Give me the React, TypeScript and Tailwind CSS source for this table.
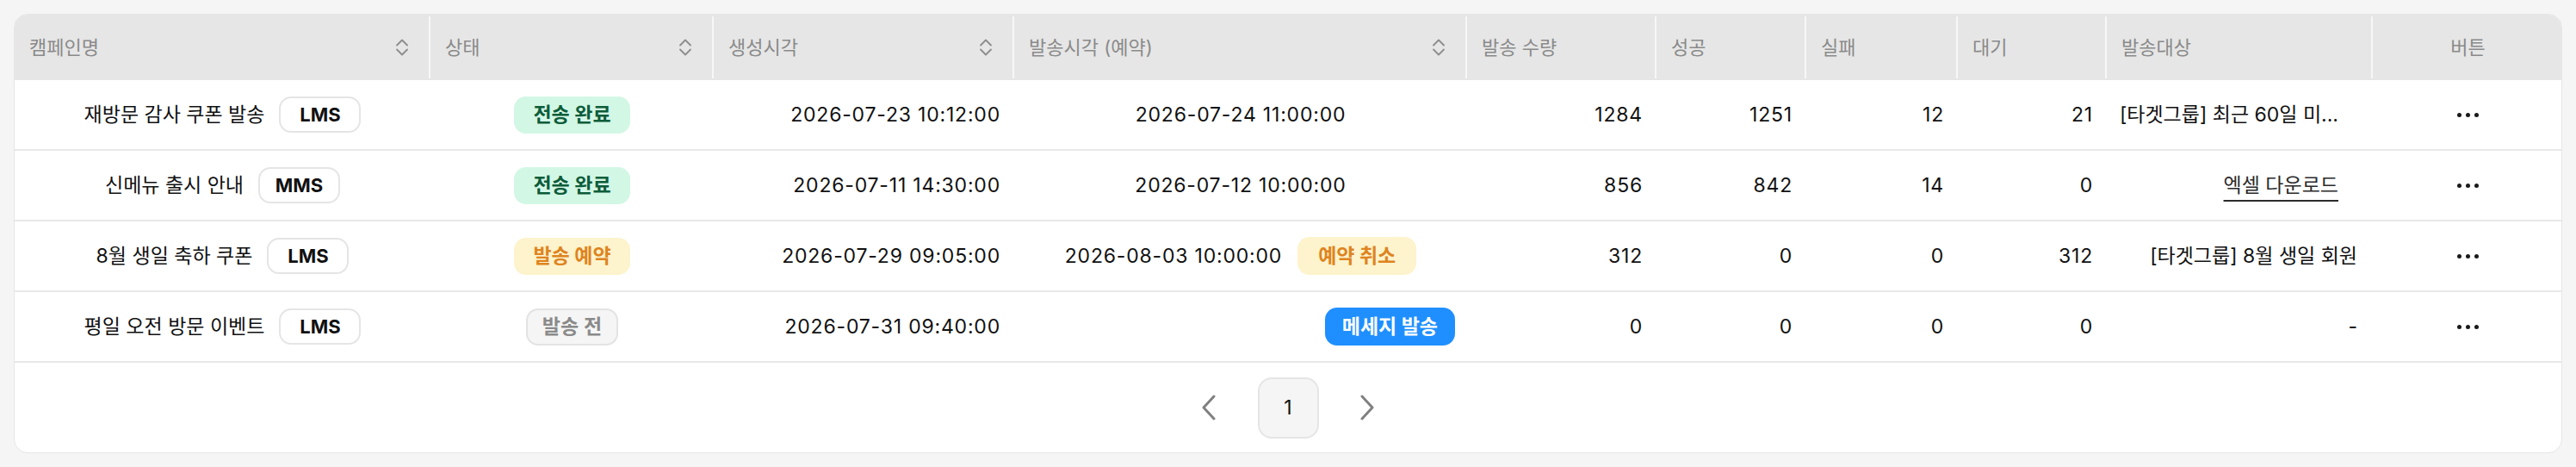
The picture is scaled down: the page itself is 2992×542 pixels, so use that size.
const GRID =
  "grid grid-cols-[483px_329px_349px_526px_220px_174px_176px_173px_309px_221px]";

type Status = "done" | "reserved" | "draft";

interface Row {
  name: string;
  kind: string;
  status: Status;
  createdAt: string;
  sendAt: string | null;
  total: number;
  success: number;
  fail: number;
  wait: number;
  target: string;
  targetType: "text" | "excel" | "none";
}

const rows: Row[] = [
  {
    name: "재방문 감사 쿠폰 발송",
    kind: "LMS",
    status: "done",
    createdAt: "2026-07-23 10:12:00",
    sendAt: "2026-07-24 11:00:00",
    total: 1284,
    success: 1251,
    fail: 12,
    wait: 21,
    target: "[타겟그룹] 최근 60일 미...",
    targetType: "text",
  },
  {
    name: "신메뉴 출시 안내",
    kind: "MMS",
    status: "done",
    createdAt: "2026-07-11 14:30:00",
    sendAt: "2026-07-12 10:00:00",
    total: 856,
    success: 842,
    fail: 14,
    wait: 0,
    target: "엑셀 다운로드",
    targetType: "excel",
  },
  {
    name: "8월 생일 축하 쿠폰",
    kind: "LMS",
    status: "reserved",
    createdAt: "2026-07-29 09:05:00",
    sendAt: "2026-08-03 10:00:00",
    total: 312,
    success: 0,
    fail: 0,
    wait: 312,
    target: "[타겟그룹] 8월 생일 회원",
    targetType: "text",
  },
  {
    name: "평일 오전 방문 이벤트",
    kind: "LMS",
    status: "draft",
    createdAt: "2026-07-31 09:40:00",
    sendAt: null,
    total: 0,
    success: 0,
    fail: 0,
    wait: 0,
    target: "-",
    targetType: "none",
  },
];

// header columns, sortable ones get the up/down icon
const headers: { label: string; sort?: boolean; center?: boolean }[] = [
  { label: "캠페인명", sort: true },
  { label: "상태", sort: true },
  { label: "생성시각", sort: true },
  { label: "발송시각 (예약)", sort: true },
  { label: "발송 수량" },
  { label: "성공" },
  { label: "실패" },
  { label: "대기" },
  { label: "발송대상" },
  { label: "버튼", center: true },
];

function SortIcon() {
  return (
    <svg width="18" height="24" viewBox="0 0 18 24" fill="none" stroke="#8c8c8c" strokeWidth="1.8" strokeLinecap="round" strokeLinejoin="round">
      <path d="M3 9.5 L9 3.5 L15 9.5" />
      <path d="M3 14.5 L9 20.5 L15 14.5" />
    </svg>
  );
}

function StatusBadge({ status }: { status: Status }) {
  if (status === "done") {
    return (
      <span className="h-[43px] px-[22px] rounded-[14px] bg-[#d2f7e5] text-[#0d5c3a] font-bold flex items-center">
        전송 완료
      </span>
    );
  }
  if (status === "reserved") {
    return (
      <span className="h-[43px] px-[22px] rounded-[14px] bg-[#fdf3cc] text-[#de8421] font-bold flex items-center">
        발송 예약
      </span>
    );
  }
  return (
    <span className="h-[43px] px-[17px] rounded-[14px] bg-[#f5f5f5] border-2 border-[#e3e3e3] text-[#8a8a8a] font-semibold flex items-center">
      발송 전
    </span>
  );
}

function SendTimeCell({ row }: { row: Row }) {
  if (!row.sendAt) {
    return (
      <div className="flex items-center justify-end pr-[14px]">
        <button className="h-[44px] px-[20px] rounded-[14px] bg-[#1f8fff] text-white font-bold">
          메세지 발송
        </button>
      </div>
    );
  }
  return (
    <div className="flex items-center justify-center gap-[18px]">
      <span className="tracking-[0.035em]">{row.sendAt}</span>
      {row.status === "reserved" && (
        <span className="h-[44px] px-[24px] rounded-[14px] bg-[#fdf3cc] text-[#de8421] font-bold flex items-center">
          예약 취소
        </span>
      )}
    </div>
  );
}

function TargetCell({ row }: { row: Row }) {
  if (row.targetType === "excel") {
    return (
      <div className="flex items-center justify-end pr-[40px]">
        <span className="text-[#2b2b2b] underline decoration-2 underline-offset-[9px]">{row.target}</span>
      </div>
    );
  }
  if (row.target.endsWith("...")) {
    return (
      <div className="flex items-center justify-end pr-[40px]">
        <span className="whitespace-nowrap">{row.target}</span>
      </div>
    );
  }
  return (
    <div className="flex items-center justify-end pr-[18px]">
      <span className="whitespace-nowrap">{row.target}</span>
    </div>
  );
}

function Dots() {
  return (
    <div className="flex items-center gap-[5px]">
      <span className="w-[5px] h-[5px] rounded-full bg-[#1a1a1a]" />
      <span className="w-[5px] h-[5px] rounded-full bg-[#1a1a1a]" />
      <span className="w-[5px] h-[5px] rounded-full bg-[#1a1a1a]" />
    </div>
  );
}

function Chevron({ dir }: { dir: "left" | "right" }) {
  return (
    <svg width="20" height="30" viewBox="0 0 20 30" fill="none" stroke="#808080" strokeWidth="3" strokeLinecap="round" strokeLinejoin="round">
      {dir === "left" ? <path d="M16 2 L4 15 L16 28" /> : <path d="M4 2 L16 15 L4 28" />}
    </svg>
  );
}

export default function App() {
  return (
    <div
      className="w-[2992px] h-[542px] bg-[#f5f5f5] pt-[16px] pl-[16px] text-[23px] text-[#111]"
      style={{ fontFamily: 'Inter, "Noto Sans CJK KR", "Noto Sans", sans-serif' }}
    >
      <div className="w-[2960px] bg-white rounded-[16px] overflow-hidden border border-[#e6e6e6]">
        {/* header */}
        <div className={`${GRID} h-[76px] bg-[#e6e6e6] text-[22px] text-[#8a8a8a]`}>
          {headers.map((h, i) => (
            <div
              key={h.label}
              className={`flex items-center my-[2px] ${i < headers.length - 1 ? "border-r-2 border-[#f7f7f7]" : ""} ${
                h.center ? "justify-center" : "justify-between pl-[17px] pr-[22px]"
              }`}
            >
              <span>{h.label}</span>
              {h.sort && <SortIcon />}
            </div>
          ))}
        </div>

        {/* rows */}
        {rows.map((r) => (
          <div key={r.name} className={`${GRID} h-[82px] border-b-2 border-[#e8e8e8]`}>
            <div className="flex items-center justify-center gap-[17px]">
              <span>{r.name}</span>
              <span className="w-[95px] h-[42px] rounded-[14px] border-2 border-[#e5e5e5] font-bold text-[22px] flex items-center justify-center">
                {r.kind}
              </span>
            </div>
            <div className="flex items-center justify-center">
              <StatusBadge status={r.status} />
            </div>
            <div className="flex items-center justify-end pr-[16px] tracking-[0.035em]">{r.createdAt}</div>
            <SendTimeCell row={r} />
            <div className="flex items-center justify-end pr-[16px] tracking-[0.035em]">{r.total}</div>
            <div className="flex items-center justify-end pr-[16px] tracking-[0.035em]">{r.success}</div>
            <div className="flex items-center justify-end pr-[16px] tracking-[0.035em]">{r.fail}</div>
            <div className="flex items-center justify-end pr-[16px] tracking-[0.035em]">{r.wait}</div>
            <TargetCell row={r} />
            <div className="flex items-center justify-center">
              <Dots />
            </div>
          </div>
        ))}

        {/* pagination */}
        <div className="h-[104px] flex items-center justify-center gap-[21px]">
          <div className="w-[71px] h-[71px] flex items-center justify-center">
            <Chevron dir="left" />
          </div>
          <div className="w-[71px] h-[71px] rounded-[16px] bg-[#f5f5f5] border-2 border-[#e5e5e5] flex items-center justify-center">
            1
          </div>
          <div className="w-[71px] h-[71px] flex items-center justify-center">
            <Chevron dir="right" />
          </div>
        </div>
      </div>
    </div>
  );
}
